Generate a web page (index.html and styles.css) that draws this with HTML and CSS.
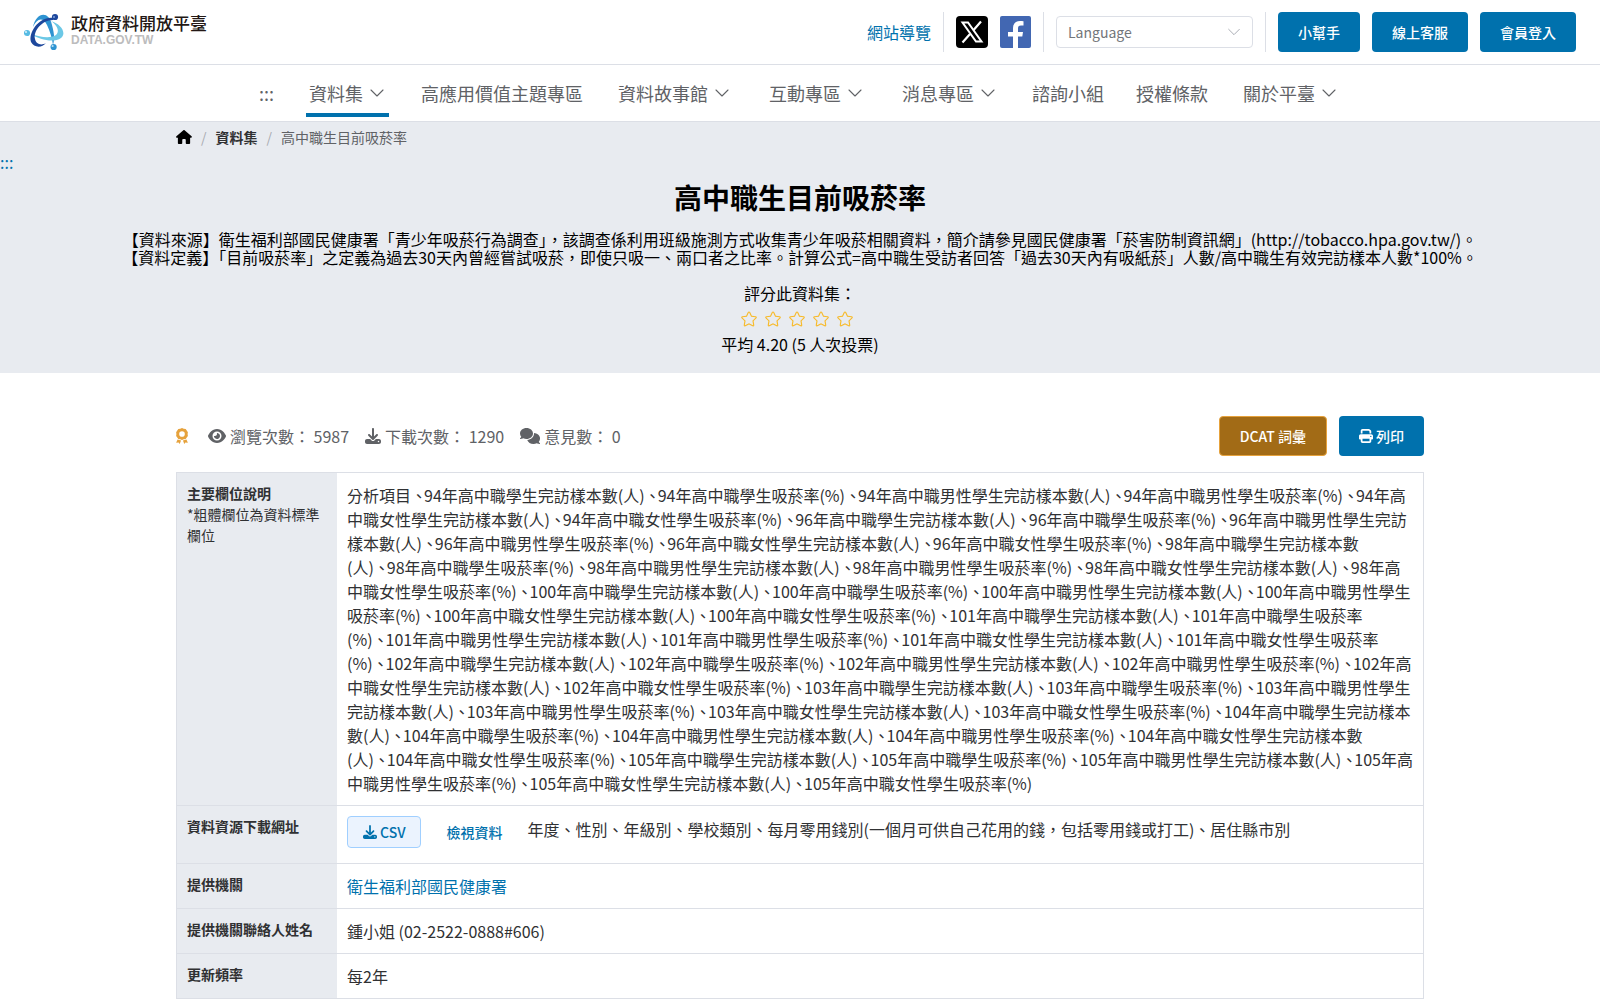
FILE: index.html
```
<!DOCTYPE html>
<html lang="zh-Hant-TW">
<head>
    <meta charset="UTF-8">
    <meta name="viewport" content="width=device-width, initial-scale=1.0">
    <title>高中職生目前吸菸率 | 政府資料開放平臺</title>
    <link rel="stylesheet" href="styles.css">
</head>
<body>
    <svg class="defs" aria-hidden="true">
        <symbol id="chevron" viewBox="0 0 18 18">
            <path d="M3 6l6 6 6-6" fill="none" stroke="currentColor" stroke-width="1.1" stroke-linecap="round" stroke-linejoin="round"/>
        </symbol>
        <symbol id="star" viewBox="0 0 1024 1024">
            <path fill="currentColor" d="M512 747.84l228.16 119.936a6.4 6.4 0 0 0 9.28-6.72l-43.52-254.08 184.512-179.904a6.4 6.4 0 0 0-3.52-10.88l-255.104-37.12L517.76 147.904a6.4 6.4 0 0 0-11.52 0L392.192 379.072l-255.104 37.12a6.4 6.4 0 0 0-3.52 10.88L318.08 606.976l-43.584 254.08a6.4 6.4 0 0 0 9.28 6.72L512 747.84zM313.6 924.48a70.4 70.4 0 0 1-102.144-74.24l37.888-220.928L88.96 472.96A70.4 70.4 0 0 1 128 352.896l221.76-32.256 99.2-200.96a70.4 70.4 0 0 1 126.208 0l99.2 200.96 221.824 32.256a70.4 70.4 0 0 1 39.04 120.064L774.72 629.376l37.888 220.928a70.4 70.4 0 0 1-102.144 74.24L512 820.096l-198.4 104.32z"/>
        </symbol>
        <symbol id="download" viewBox="0 0 512 512">
            <path fill="currentColor" d="M288 32c0-17.7-14.3-32-32-32s-32 14.3-32 32V274.7l-73.4-73.4c-12.5-12.5-32.8-12.5-45.3 0s-12.5 32.8 0 45.3l128 128c12.5 12.5 32.8 12.5 45.3 0l128-128c12.5-12.5 12.5-32.8 0-45.3s-32.8-12.5-45.3 0L288 274.7V32zM64 352c-35.3 0-64 28.7-64 64v32c0 35.3 28.7 64 64 64H448c35.3 0 64-28.7 64-64V416c0-35.3-28.7-64-64-64H346.5l-45.3 45.3c-25 25-65.5 25-90.5 0L165.5 352H64zm368 56a24 24 0 1 1 0 48 24 24 0 1 1 0-48z"/>
        </symbol>
    </svg>

    <header class="top-bar">
        <a class="logo" href="#">
            <svg class="logo-mark" viewBox="24 13 40 38" aria-hidden="true">
                <path d="M33 27C36 12 49 10 52 25C54 33 55 38 53 45C52 38 50 31 47 25C43 17 37 18 33 27Z" fill="#2e93d1"/>
                <path d="M51 21C61 24 67 33 61 38C54 43 40 40 31 34C40 37 50 39 56 35C60 31 57 25 51 21Z" fill="#6cc8e6"/>
                <path d="M53 20C42 20 33 31 35 39C36 44 41 46 46 43C42 48 34 48 31 42C28 32 40 16 53 18Z" fill="#1d479c"/>
                <circle cx="55" cy="17" r="3.1" fill="#1d479c"/>
                <circle cx="54" cy="17" r="1" fill="#7fa3d8"/>
                <circle cx="27" cy="33" r="3.1" fill="#57bbe3"/>
                <circle cx="26" cy="32" r="1.1" fill="#d4effa"/>
                <circle cx="53.6" cy="47" r="3.1" fill="#2e93d1"/>
                <circle cx="52.6" cy="46" r="1.1" fill="#b9e0f5"/>
            </svg>
            <span class="logo-text">
                <span class="logo-name">政府資料開放平臺</span>
                <span class="logo-domain">DATA.GOV.TW</span>
            </span>
        </a>
        <div class="top-tools">
            <a class="link" href="#">網站導覽</a>
            <span class="divider"></span>
            <a class="social" href="#" aria-label="X">
                <svg width="32" height="32" viewBox="0 0 32 32">
                    <rect width="32" height="32" rx="4" fill="#000"/>
                    <path d="M6.500 6.500h5.500L25.500 25.500H20z" fill="none" stroke="#fff" stroke-width="2"/>
                    <path d="M25 5.500L17.200 14.400M14 18L6.500 26.500" stroke="#fff" stroke-width="2.200"/>
                </svg>
            </a>
            <a class="social" href="#" aria-label="Facebook">
                <svg width="31" height="32" viewBox="0 0 31 32">
                    <rect width="31" height="32" rx="2" fill="#4267b2"/>
                    <path d="M13 32V20.500H8V16h5v-4c0-4.800 2.800-7 7-7 1.700 0 3 .1 3.500.2v4.300h-2.500c-2.400 0-3 1.200-3 2.900V16h5l-.7 4.500H18V32z" fill="#fff"/>
                </svg>
            </a>
            <span class="divider"></span>
            <div class="lang">
                <select class="lang-select" aria-label="Language">
                    <option>Language</option>
                    <option>English</option>
                    <option>中文</option>
                </select>
                <svg class="lang-arrow" aria-hidden="true"><use href="#chevron"/></svg>
            </div>
            <span class="divider"></span>
            <button class="btn" type="button">小幫手</button>
            <button class="btn" type="button">線上客服</button>
            <button class="btn" type="button">會員登入</button>
        </div>
    </header>

    <nav class="main-nav">
        <a class="nav-item nav-plain" href="#">:::</a>
        <a class="nav-item active" href="#">資料集<svg class="nav-arrow"><use href="#chevron"/></svg></a>
        <a class="nav-item nav-plain" href="#">高應用價值主題專區</a>
        <a class="nav-item" href="#">資料故事館<svg class="nav-arrow"><use href="#chevron"/></svg></a>
        <a class="nav-item" href="#">互動專區<svg class="nav-arrow"><use href="#chevron"/></svg></a>
        <a class="nav-item" href="#">消息專區<svg class="nav-arrow"><use href="#chevron"/></svg></a>
        <a class="nav-item nav-plain" href="#">諮詢小組</a>
        <a class="nav-item nav-plain" href="#">授權條款</a>
        <a class="nav-item" href="#">關於平臺<svg class="nav-arrow"><use href="#chevron"/></svg></a>
    </nav>

    <main>
        <section class="hero">
            <div class="breadcrumb">
                <a href="#" aria-label="首頁">
                    <svg class="home" viewBox="0 0 576 512"><path d="M575.8 255.500c0 18-15 32.100-32 32.100h-32l.7 160.200c0 2.700-.2 5.400-.5 8.100V472c0 22.100-17.900 40-40 40H392c-22.100 0-40-17.900-40-40V360c0-17.700-14.300-32-32-32h-64c-17.700 0-32 14.300-32 32v112c0 22.100-17.900 40-40 40h-80c-22.100 0-40-17.900-40-40V287.600H32c-18 0-32-14-32-32.100 0-9 3-17 10-24L266.400 8c7-7 15-8 22-8s15 2 21 7l255.400 224.500c8 7 12 15 11 24z"/></svg>
                </a>
                <span class="slash">/</span>
                <a class="crumb" href="#">資料集</a>
                <span class="slash">/</span>
                <span>高中職生目前吸菸率</span>
            </div>
            <a class="link skip" href="#">:::</a>
            <h1 class="title">高中職生目前吸菸率</h1>
            <p class="desc">【資料來源】衛生福利部國民健康署「青少年吸菸行為調查」，該調查係利用班級施測方式收集青少年吸菸相關資料，簡介請參見國民健康署「菸害防制資訊網」(http://tobacco.hpa.gov.tw/)。<br>【資料定義】「目前吸菸率」之定義為過去30天內曾經嘗試吸菸，即使只吸一、兩口者之比率。計算公式=高中職生受訪者回答「過去30天內有吸紙菸」人數/高中職生有效完訪樣本人數*100%。</p>
            <div class="rating">
                <p>評分此資料集：</p>
                <div class="stars">
                    <svg><use href="#star"/></svg>
                    <svg><use href="#star"/></svg>
                    <svg><use href="#star"/></svg>
                    <svg><use href="#star"/></svg>
                    <svg><use href="#star"/></svg>
                </div>
                <p>平均 4.20 (5 人次投票)</p>
            </div>
        </section>

        <section class="content">
            <div class="meta">
                <div class="counts">
                    <span class="count award">
                        <svg class="icon-12" viewBox="0 0 384 512">
                            <path fill="currentColor" fill-rule="evenodd" d="M192 0l56 26 62 4 34 52 36 50-8 60 8 60-36 50-34 52-62 4-56 26-56-26-62-4-34-52-36-50 8-60-8-60 36-50 34-52 62-4zM192 102a90 90 0 1 0 0 180 90 90 0 1 0 0-180z"/>
                            <path d="M50 366l112 30-44 116-34-52-80 10zM334 366l-112 30 44 116 34-52 80 10z" fill="currentColor"/>
                        </svg>
                    </span>
                    <span class="count">
                        <svg class="icon-18" viewBox="0 0 576 512"><path fill="currentColor" d="M288 32c-80.800 0-145.500 36.800-192.600 80.600C48.600 156 17.300 208 2.500 243.700c-3.300 7.900-3.300 16.700 0 24.600C17.300 304 48.600 356 95.400 399.400C142.500 443.200 207.200 480 288 480s145.500-36.800 192.600-80.600c46.800-43.500 78.100-95.400 93-131.100c3.300-7.900 3.300-16.700 0-24.600c-14.900-35.700-46.200-87.700-93-131.100C433.500 68.800 368.800 32 288 32zM144 256a144 144 0 1 1 288 0 144 144 0 1 1-288 0zm144-64c0 35.300-28.700 64-64 64c-7.100 0-13.900-1.200-20.300-3.300c-5.500-1.800-11.900 1.600-11.700 7.400c.3 6.900 1.300 13.800 3.200 20.700c13.700 51.200 66.400 81.600 117.600 67.900s81.600-66.400 67.900-117.600c-11.100-41.500-47.800-69.400-88.600-71.100c-5.800-.2-9.200 6.100-7.400 11.700c2.100 6.400 3.300 13.200 3.300 20.300z"/></svg>
                        瀏覽次數： 5987
                    </span>
                    <span class="count">
                        <svg class="icon-16"><use href="#download"/></svg>
                        下載次數： 1290
                    </span>
                    <span class="count">
                        <svg class="icon-20" viewBox="0 0 640 512"><path fill="currentColor" d="M208 352c114.900 0 208-78.800 208-176S322.900 0 208 0S0 78.800 0 176c0 38.600 14.700 74.300 39.600 103.400c-3.500 9.400-8.700 17.700-14.200 24.700c-4.800 6.200-9.700 11-13.300 14.300c-1.800 1.600-3.300 2.900-4.300 3.700C-.3 327.200-2 335 1.100 341.800S10.600 352 18 352c21.800 0 43.800-5.600 62.100-12.500c9.200-3.500 17.800-7.400 25.200-11.400C134.100 343.300 169.800 352 208 352zM448 176c0 112.300-99.100 196.900-216.500 207C255.800 457.400 336.400 512 432 512c38.200 0 73.900-8.700 104.700-23.900c7.500 4 16 7.900 25.200 11.400c18.300 6.900 40.300 12.500 62.100 12.500c7.500 0 13.900-4.600 16.100-11.800s-.6-15-6.700-19.400c-1-.8-2.500-2-4.300-3.700c-3.600-3.300-8.500-8.100-13.300-14.300c-5.500-7-10.700-15.400-14.200-24.700c24.900-29 39.600-64.700 39.600-103.400c0-92.800-84.900-168.900-192.600-175.500c.4 5.100 .6 10.300 .6 15.500z"/></svg>
                        意見數： 0
                    </span>
                </div>
                <div class="actions">
                    <button class="btn btn-warning" type="button">DCAT 詞彙</button>
                    <button class="btn" type="button">
                        <svg class="icon-14" viewBox="0 0 512 512"><path fill="currentColor" d="M128 0C92.700 0 64 28.700 64 64v96h64V64h226.700L384 93.300V160h64V93.300c0-17-6.700-33.300-18.700-45.300L400 18.700C388 6.700 371.700 0 354.700 0H128zm256 352v96H128v-96h256zm64 32h32c17.700 0 32-14.300 32-32v-96c0-35.300-28.700-64-64-64H64c-35.300 0-64 28.700-64 64v96c0 17.700 14.300 32 32 32h32v64c0 35.300 28.700 64 64 64h256c35.300 0 64-28.700 64-64v-64zm-16-136a24 24 0 1 1 0 48 24 24 0 1 1 0-48z"/></svg>
                        列印
                    </button>
                </div>
            </div>

            <table class="detail">
                <tr>
                    <th scope="row">主要欄位說明<span class="note">*粗體欄位為資料標準欄位</span></th>
                    <td>分析項目<span class="sep">、</span>&#8288;94年高中職學生完訪樣本數(人)<span class="sep">、</span>&#8288;94年高中職學生吸菸率(%)<span class="sep">、</span>&#8288;94年高中職男性學生完訪樣本數(人)<span class="sep">、</span>&#8288;94年高中職男性學生吸菸率(%)<span class="sep">、</span>&#8288;94年高中職女性學生完訪樣本數(人)<span class="sep">、</span>&#8288;94年高中職女性學生吸菸率(%)<span class="sep">、</span>&#8288;96年高中職學生完訪樣本數(人)<span class="sep">、</span>&#8288;96年高中職學生吸菸率(%)<span class="sep">、</span>&#8288;96年高中職男性學生完訪樣本數(人)<span class="sep">、</span>&#8288;96年高中職男性學生吸菸率(%)<span class="sep">、</span>&#8288;96年高中職女性學生完訪樣本數(人)<span class="sep">、</span>&#8288;96年高中職女性學生吸菸率(%)<span class="sep">、</span>&#8288;98年高中職學生完訪樣本數(人)<span class="sep">、</span>&#8288;98年高中職學生吸菸率(%)<span class="sep">、</span>&#8288;98年高中職男性學生完訪樣本數(人)<span class="sep">、</span>&#8288;98年高中職男性學生吸菸率(%)<span class="sep">、</span>&#8288;98年高中職女性學生完訪樣本數(人)<span class="sep">、</span>&#8288;98年高中職女性學生吸菸率(%)<span class="sep">、</span>&#8288;100年高中職學生完訪樣本數(人)<span class="sep">、</span>&#8288;100年高中職學生吸菸率(%)<span class="sep">、</span>&#8288;100年高中職男性學生完訪樣本數(人)<span class="sep">、</span>&#8288;100年高中職男性學生吸菸率(%)<span class="sep">、</span>&#8288;100年高中職女性學生完訪樣本數(人)<span class="sep">、</span>&#8288;100年高中職女性學生吸菸率(%)<span class="sep">、</span>&#8288;101年高中職學生完訪樣本數(人)<span class="sep">、</span>&#8288;101年高中職學生吸菸率(%)<span class="sep">、</span>&#8288;101年高中職男性學生完訪樣本數(人)<span class="sep">、</span>&#8288;101年高中職男性學生吸菸率(%)<span class="sep">、</span>&#8288;101年高中職女性學生完訪樣本數(人)<span class="sep">、</span>&#8288;101年高中職女性學生吸菸率(%)<span class="sep">、</span>&#8288;102年高中職學生完訪樣本數(人)<span class="sep">、</span>&#8288;102年高中職學生吸菸率(%)<span class="sep">、</span>&#8288;102年高中職男性學生完訪樣本數(人)<span class="sep">、</span>&#8288;102年高中職男性學生吸菸率(%)<span class="sep">、</span>&#8288;102年高中職女性學生完訪樣本數(人)<span class="sep">、</span>&#8288;102年高中職女性學生吸菸率(%)<span class="sep">、</span>&#8288;103年高中職學生完訪樣本數(人)<span class="sep">、</span>&#8288;103年高中職學生吸菸率(%)<span class="sep">、</span>&#8288;103年高中職男性學生完訪樣本數(人)<span class="sep">、</span>&#8288;103年高中職男性學生吸菸率(%)<span class="sep">、</span>&#8288;103年高中職女性學生完訪樣本數(人)<span class="sep">、</span>&#8288;103年高中職女性學生吸菸率(%)<span class="sep">、</span>&#8288;104年高中職學生完訪樣本數(人)<span class="sep">、</span>&#8288;104年高中職學生吸菸率(%)<span class="sep">、</span>&#8288;104年高中職男性學生完訪樣本數(人)<span class="sep">、</span>&#8288;104年高中職男性學生吸菸率(%)<span class="sep">、</span>&#8288;104年高中職女性學生完訪樣本數(人)<span class="sep">、</span>&#8288;104年高中職女性學生吸菸率(%)<span class="sep">、</span>&#8288;105年高中職學生完訪樣本數(人)<span class="sep">、</span>&#8288;105年高中職學生吸菸率(%)<span class="sep">、</span>&#8288;105年高中職男性學生完訪樣本數(人)<span class="sep">、</span>&#8288;105年高中職男性學生吸菸率(%)<span class="sep">、</span>&#8288;105年高中職女性學生完訪樣本數(人)<span class="sep">、</span>&#8288;105年高中職女性學生吸菸率(%)</td>
                </tr>
                <tr>
                    <th scope="row">資料資源下載網址</th>
                    <td>
                        <div class="resource">
                            <button class="btn-csv" type="button"><svg class="icon-14"><use href="#download"/></svg>CSV</button>
                            <a class="link view" href="#">檢視資料</a>
                            <span class="resource-desc">年度、性別、年級別、學校類別、每月零用錢別(一個月可供自己花用的錢，包括零用錢或打工)、居住縣市別</span>
                        </div>
                    </td>
                </tr>
                <tr>
                    <th scope="row">提供機關</th>
                    <td><a class="link" href="#">衛生福利部國民健康署</a></td>
                </tr>
                <tr>
                    <th scope="row">提供機關聯絡人姓名</th>
                    <td>鍾小姐 (02-2522-0888#606)</td>
                </tr>
                <tr>
                    <th scope="row">更新頻率</th>
                    <td>每2年</td>
                </tr>
            </table>
        </section>
    </main>
</body>
</html>
```
FILE: styles.css
```
* {
    box-sizing: border-box;
}
body {
    margin: 0;
    font-family: "Noto Sans CJK TC", sans-serif;
    font-size: 16px;
    line-height: 24px;
    color: #303133;
    background: #fff;
}
a {
    color: inherit;
    text-decoration: none;
}
button, select {
    font-family: inherit;
}
p, h1 {
    margin: 0;
}
.defs {
    display: none;
}
.link {
    color: #0071ad;
}

/* top bar */
.top-bar {
    display: flex;
    justify-content: space-between;
    align-items: center;
    padding: 12px 24px;
    border-bottom: 1px solid #dcdfe6;
}
.logo {
    display: flex;
    gap: 7px;
}
.logo-mark {
    width: 40px;
    height: 38px;
}
.logo-text {
    display: flex;
    flex-direction: column;
    gap: 1px;
}
.logo-name {
    font-size: 17px;
    line-height: 20px;
    font-weight: 500;
    color: #231815;
}
.logo-domain {
    font-family: "Liberation Sans", Arial, sans-serif;
    font-size: 12px;
    line-height: 12px;
    font-weight: bold;
    color: #bcbcbd;
}
.top-tools {
    display: flex;
    align-items: center;
    gap: 12px;
}
.divider {
    width: 1px;
    height: 40px;
    background: #dcdfe6;
}
.social, .social svg {
    display: block;
}
.lang {
    position: relative;
    width: 197px;
}
.lang-select {
    display: block;
    width: 100%;
    height: 32px;
    padding: 0 11px;
    appearance: none;
    background: #fff;
    border: 1px solid #dcdfe6;
    border-radius: 4px;
    font-size: 14px;
    color: #73767a;
}
.lang-arrow {
    position: absolute;
    top: 8px;
    right: 11px;
    width: 16px;
    height: 16px;
    color: #a8abb2;
    pointer-events: none;
}
.btn {
    display: inline-flex;
    align-items: center;
    gap: 3px;
    height: 40px;
    padding: 0 20px;
    border: none;
    border-radius: 4px;
    background: #0071ad;
    color: #fff;
    font-size: 14px;
    font-weight: 500;
    cursor: pointer;
}
.btn-warning {
    background: #a26b16;
    border: 1px solid #e6a23c;
}

/* navigation */
.main-nav {
    display: flex;
    justify-content: center;
    gap: 32px;
    padding: 8px 0 4px;
    border-bottom: 1px solid #dcdfe6;
}
.nav-item {
    display: flex;
    align-items: center;
    height: 44px;
    padding: 0 3px;
    border-bottom: 4px solid transparent;
    font-size: 18px;
    color: #606266;
}
.nav-item.active {
    border-bottom-color: #0071ad;
}
.nav-plain {
    padding: 0;
}
.nav-arrow {
    width: 18px;
    height: 18px;
    margin-left: 5px;
}

/* dataset heading */
.hero {
    padding-bottom: 17px;
    background: #e8ebf0;
    color: #000;
    text-align: center;
}
.breadcrumb {
    display: flex;
    align-items: center;
    gap: 9px;
    width: 78%;
    margin: 0 auto;
    padding: 3px 0 1px;
    font-size: 14px;
    color: #606266;
}
.breadcrumb .crumb {
    font-weight: bold;
    color: #303133;
}
.home {
    display: block;
    width: 16px;
    height: 14px;
    fill: #000;
}
.slash {
    color: #a8abb2;
}
.skip {
    display: block;
    text-align: left;
}
.title {
    padding: 3px 0 13px;
    font-size: 28px;
    line-height: 40px;
    font-weight: bold;
}
.desc {
    line-height: 18px;
}
.rating {
    padding-top: 15px;
}
.stars {
    display: flex;
    justify-content: center;
    padding: 5px 0 4px;
}
.stars svg {
    width: 18px;
    height: 18px;
    margin-right: 6px;
    color: #f7ba2a;
}

/* counts and table */
.content {
    width: 78%;
    margin: 0 auto;
    padding: 43px 0 40px;
}
.meta {
    display: flex;
    justify-content: space-between;
    align-items: center;
    margin-bottom: 16px;
}
.counts {
    display: flex;
    gap: 16px;
    color: #606266;
}
.count {
    display: flex;
    align-items: center;
    gap: 4px;
}
.award {
    margin-right: 4px;
    color: #e6a23c;
}
.actions {
    display: flex;
    gap: 12px;
}
.icon-12 {
    width: 12px;
    height: 16px;
}
.icon-14 {
    width: 14px;
    height: 14px;
}
.icon-16 {
    width: 16px;
    height: 16px;
}
.icon-18 {
    width: 18px;
    height: 16px;
}
.icon-20 {
    width: 20px;
    height: 16px;
}
.detail {
    width: 100%;
    border: 1px solid #dcdfe6;
    border-bottom: none;
    border-spacing: 0;
}
.detail th, .detail td {
    padding: 10px;
    border-bottom: 1px solid #dcdfe6;
    text-align: left;
    vertical-align: top;
}
.detail th {
    width: 160px;
    background: #e8ebf0;
    font-size: 14px;
    line-height: 21px;
}
.note {
    display: block;
    font-weight: normal;
}
/* half-width enumeration comma between field names */
.sep {
    padding: 0 1px 0 4px;
    font-feature-settings: "halt";
}
.resource {
    display: flex;
    align-items: flex-start;
    gap: 25px;
    padding-bottom: 5px;
}
.resource-desc {
    line-height: 26px;
}
.btn-csv {
    display: inline-flex;
    align-items: center;
    gap: 3px;
    height: 32px;
    padding: 0 15px;
    border: 1px solid #a0cfff;
    border-radius: 4px;
    background: #ebf3fe;
    color: #0071ad;
    font-size: 14px;
    font-weight: 500;
}
.view {
    font-size: 14px;
    line-height: 32px;
    font-weight: 500;
}
```
